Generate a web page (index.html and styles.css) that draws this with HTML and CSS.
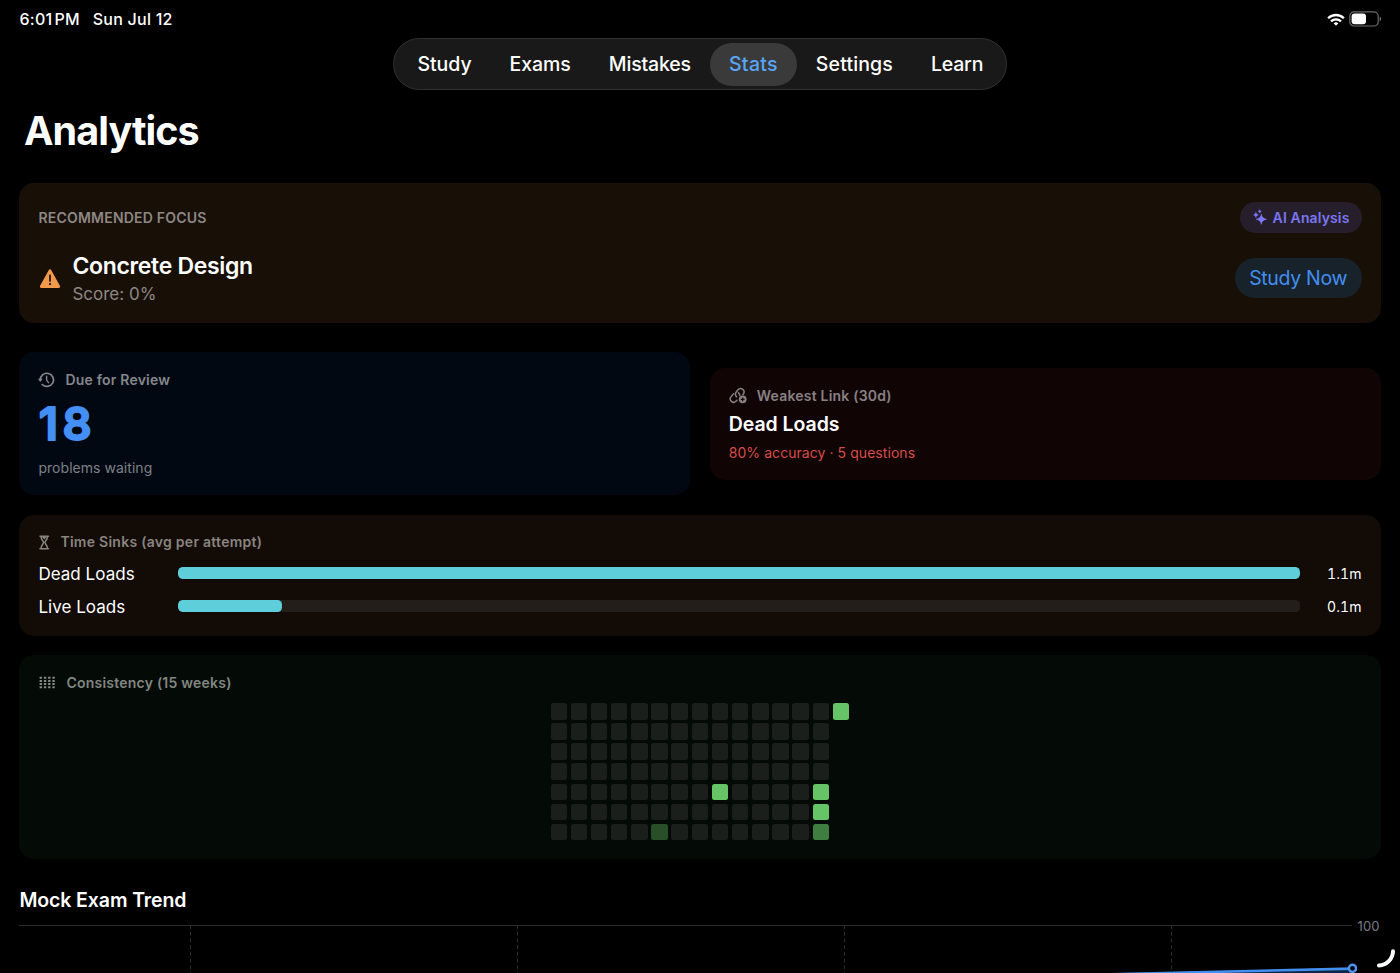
FILE: index.html
```html
<!DOCTYPE html>
<html lang="en">
<head>
<meta charset="utf-8">
<title>Analytics</title>
<link rel="stylesheet" href="styles.css">
</head>
<body>
<header class="status">
  <span class="time">6:01<i></i>PM</span><span class="date">Sun Jul 12</span>
  <span class="status-icons">
    <svg width="18" height="13" viewBox="0 0 18 13"><g fill="none" stroke="#fff" stroke-width="2.3"><path d="M1.1 5.2a11.3 11.3 0 0 1 15.8 0"/><path d="M4 8.4a7.1 7.1 0 0 1 10 0"/></g><path d="M9 12.8l-2.4-2.6a3.6 3.6 0 0 1 4.8 0z" fill="#fff"/></svg>
    <svg width="33" height="16" viewBox="0 0 33 16"><rect x=".8" y=".8" width="28.4" height="14.2" rx="4.3" fill="none" stroke="#6a6a6a" stroke-width="1.2"/><rect x="2.6" y="2.5" width="14.4" height="10.8" rx="3" fill="#fff"/><path d="M30.6 5.6q1.7.8 1.7 2.3t-1.7 2.3z" fill="#6a6a6a"/></svg>
  </span>
</header>
<nav class="tabs">
  <a class="tab">Study</a>
  <a class="tab">Exams</a>
  <a class="tab tab-mistakes">Mistakes</a>
  <a class="tab active">Stats</a>
  <a class="tab tab-settings">Settings</a>
  <a class="tab tab-learn">Learn</a>
</nav>
<h1 class="title">Analytics</h1>
<main class="content">
  <section class="card focus">
    <div class="focus-head">
      <span class="caps">RECOMMENDED FOCUS</span>
      <span class="ai"><svg width="14" height="17" viewBox="0 0 14 17"><path d="M8.3 5q.6 4.400 5.300 5.200-4.700.8-5.300 5.200-.6-4.400-5.300-5.200 4.700-.8 5.300-5.200zM2.900 3.200q.3 2.300 2.500 2.700-2.200.4-2.500 2.700-.3-2.300-2.500-2.700 2.200-.4 2.500-2.700zM6.700.6q.2 1.500 1.700 1.800-1.500.3-1.700 1.800-.2-1.500-1.700-1.800 1.500-.3 1.700-1.800z" fill="#7d7aff" stroke="#7d7aff" stroke-width=".4" stroke-linejoin="round"/></svg>AI Analysis</span>
    </div>
    <div class="focus-body">
      <svg class="warn" width="22" height="20" viewBox="0 0 22 20"><path d="M11 1.900L19.600 17.400H2.400z" fill="#f19a4b" stroke="#f19a4b" stroke-width="3" stroke-linejoin="round"/><path d="M11 6.300v5.600" stroke="#180f07" stroke-width="1.700" stroke-linecap="round"/><circle cx="11" cy="15.100" r="1.100" fill="#180f07"/></svg>
      <div class="topic"><span class="topic-name">Concrete Design</span><span class="score">Score: 0%</span></div>
      <button class="study">Study Now</button>
    </div>
  </section>
  <div class="pair">
    <section class="card due">
      <h2 class="label"><svg width="17" height="16" viewBox="0 0 17 16"><path d="M2.300 8a6.600 6.600 0 1 1 1.900 4.500" fill="none" stroke="currentColor" stroke-width="1.700" stroke-linecap="round"/><path d="M0 6.700h4.700L2.300 9.900z" fill="currentColor"/><path d="M8.600 4.200v4l1.900 2.500" fill="none" stroke="currentColor" stroke-width="1.400" stroke-linecap="round" stroke-linejoin="round"/></svg><span>Due for Review</span></h2>
      <svg class="count" width="60" height="44"><text x=".8" y="38">18</text></svg>
      <p class="note">problems waiting</p>
    </section>
    <section class="card weak">
      <h2 class="label"><svg width="18" height="17" viewBox="0 0 18 17"><g fill="none" stroke="currentColor" stroke-width="1.500" stroke-linecap="round"><path d="M7.500 9.700a3.500 3.500 0 0 1-.7-4.100L9 2.800a3.400 3.400 0 0 1 5.600 3.800l-.8 1.100"/><path d="M9.400 5.800a3.500 3.500 0 0 1 1.400 2.700M4.400 6.900L2 9.900a3.300 3.300 0 0 0 4.900 4.400l.9-.9"/></g><circle cx="13.700" cy="12.300" r="3.900" fill="currentColor"/><path d="M13.700 10.400v3.800M11.800 12.300h3.800" stroke="#110405" stroke-width="1.200"/></svg><span>Weakest Link (30d)</span></h2>
      <p class="weak-name">Dead Loads</p>
      <p class="weak-info">80% accuracy · 5 questions</p>
    </section>
  </div>
  <section class="card sinks">
    <h2 class="label"><svg width="12" height="15" viewBox="-.5 0 12 15"><path d="M1.500 1.300h8.500M1.500 13.700h8.500M2.500 1.500c0 3.600 2.500 4.200 2.500 6s-2.500 2.400-2.500 6M9 1.500c0 3.600-2.500 4.200-2.500 6s2.500 2.400 2.500 6" fill="none" stroke="currentColor" stroke-width="1.500" stroke-linecap="round"/><path d="M3.500 2h4.500L5.750 4.500z" fill="currentColor"/></svg><span>Time Sinks (avg per attempt)</span></h2>
    <div class="sink"><span class="sink-name">Dead Loads</span><span class="track"><span class="fill" style="width:100%"></span></span><span class="sink-time">1.1m</span></div>
    <div class="sink"><span class="sink-name">Live Loads</span><span class="track"><span class="fill" style="width:9.250%"></span></span><span class="sink-time">0.1m</span></div>
  </section>
  <section class="card consistency">
    <h2 class="label"><svg width="17" height="13" viewBox="0 0 17 13"><path d="M1.600 1.700h15.400M1.600 4.900h15.400M1.600 8.100h15.400M1.600 11.300h15.400" stroke="currentColor" stroke-width="2" stroke-dasharray="2.400 1.850"/></svg><span>Consistency (15 weeks)</span></h2>
    <div class="heat" id="heat"></div>
  </section>
  <h2 class="trend-title">Mock Exam Trend</h2>
  <div class="chart">
    <svg width="1338" height="48" viewBox="0 0 1338 48"><path d="M1099 48L1333 43V48z" fill="#0c2748"/><path d="M0 .5h1333" stroke="#2c2c2e"/><path d="M171.500 0v48M498.500 0v48M825.500 0v48M1152.500 0v48" stroke="#2c2c2e" stroke-dasharray="4 2.700"/><path d="M1053 50.200L1333 43.600" stroke="#438ff0" stroke-width="2.600"/><circle cx="1333.500" cy="43.300" r="3.600" fill="#020811" stroke="#4c94ee" stroke-width="2.400"/></svg>
    <span class="axis">100</span>
  </div>
</main>
<svg class="corner" width="24" height="26" viewBox="0 0 24 26"><path d="M17 4.300A14.500 14.500 0 0 1 3 18.500" fill="none" stroke="#fff" stroke-width="4" stroke-linecap="round"/></svg>
<script src="heat.js"></script>
</body>
</html>
```
FILE: heat.js
```js
// Activity level per "row-column"; every other day is empty.
const levels = { '0-14': 'l3', '4-8': 'l3', '4-13': 'l3', '5-13': 'l3', '6-5': 'l1', '6-13': 'l2' };
const heat = document.getElementById('heat');
for (let r = 0; r < 7; r++) {
  for (let c = 0; c < 15; c++) {
    const day = document.createElement('i');
    day.className = levels[r + '-' + c] || (c === 14 ? 'none' : '');
    heat.appendChild(day);
  }
}
```
FILE: styles.css
```css
* { box-sizing: border-box; margin: 0; padding: 0; }
html { background: #000; }
body { width: 1400px; height: 973px; overflow: hidden; background: #000; color: #fff; font-family: Inter, sans-serif; position: relative; }
svg { display: block; flex: none; }
span { white-space: nowrap; }
.status { display: flex; height: 38px; align-items: center; padding: 0 18px 0 19.500px; font-size: 16px; font-weight: 500; }
.time { letter-spacing: .28px; }
.time i { display: inline-block; width: 2px; }
.date { margin-left: 12.800px; letter-spacing: .24px; }
.status-icons { margin-left: auto; display: flex; align-items: center; gap: 4px; }
.tabs { display: flex; align-items: center; width: 614px; height: 52px; margin: 0 auto; padding: 0 4.500px; border: 1px solid #303030; border-radius: 26px; background: #191919; }
.tab { height: 43px; line-height: 43px; padding: 0 19px; border-radius: 22px; font-size: 19.500px; font-weight: 500; letter-spacing: -.06px; }
.tab.active { background: #3a3a3a; color: #58a6f5; letter-spacing: .3px; }
.tab-mistakes { letter-spacing: -.16px; }
.tab-settings { letter-spacing: .13px; }
.tab-learn { letter-spacing: -.2px; }
.title { height: 81px; line-height: 83px; padding-left: 24px; font-size: 39.500px; font-weight: 700; letter-spacing: -.93px; }
.content { padding: 12px 19.400px 0; }
.card { border-radius: 15px; padding: 0 19px; }
.focus { height: 140px; background: #180f07; }
.focus-head { display: flex; height: 69px; align-items: center; justify-content: space-between; }
.caps { color: #8e8884; font-size: 14px; font-weight: 600; letter-spacing: .22px; }
.ai { display: flex; align-items: center; gap: 6px; width: 121.500px; height: 31px; padding-left: 12.500px; margin-bottom: 1px; border-radius: 16px; background: #261f2b; color: #7a76f2; font-size: 14px; font-weight: 600; letter-spacing: .13px; }
.focus-body { display: flex; align-items: center; height: 53px; }
.warn { margin-left: 1px; }
.topic { display: flex; flex-direction: column; align-items: flex-start; margin-left: 11px; padding-top: 2px; }
.topic-name { font-size: 23px; font-weight: 600; line-height: 28px; letter-spacing: -.32px; }
.score { font-size: 17px; line-height: 28px; color: #8e8884; letter-spacing: 0; }
.study { margin: 0 0 2px auto; width: 127px; height: 40px; border: 0; border-radius: 20px; background: #17222b; color: #438ff0; font: 400 19.500px Inter, sans-serif; letter-spacing: -.33px; }
.pair { display: grid; grid-template-columns: 1fr 1fr; gap: 19.500px; align-items: center; margin-top: 29px; }
.label { display: flex; align-items: center; font-size: 14px; font-weight: 600; line-height: 20px; color: #85878c; letter-spacing: .21px; }
.due { height: 143px; background: #020811; padding-top: 17.500px; }
.due .label span { margin-left: 10px; }
.count { margin-top: 12px; overflow: visible; }
.count text { font-size: 45.500px; font-weight: 600; letter-spacing: 4.500px; fill: #438ff5; stroke: #438ff5; stroke-width: 2px; stroke-linejoin: round; }
.note { margin-top: 12.500px; font-size: 14px; line-height: 20px; color: #7d8088; letter-spacing: .04px; }
.weak { height: 112px; background: #110405; padding-top: 18px; }
.weak-name { font-size: 19.500px; font-weight: 600; line-height: 37px; letter-spacing: -.06px; }
.weak-info { font-size: 14px; line-height: 20px; color: #d64d49; letter-spacing: .06px; }
.weak .label { color: #898083; }
.weak .label span { margin-left: 10px; }
.sinks { margin-top: 20px; height: 120.500px; background: #120b06; padding-top: 17px; }
.sinks .label { color: #89847f; margin-bottom: 5px; letter-spacing: .27px; }
.sinks .label span { margin-left: 10px; }
.sink { display: flex; align-items: center; height: 33px; font-size: 17px; letter-spacing: .03px; }
.sink-name { width: 139.500px; }
.track { width: 1122px; height: 12px; margin-bottom: 1px; border-radius: 4.500px; background: #241e1a; overflow: hidden; }
.fill { display: block; height: 100%; border-radius: 4.500px; background: #5fcedb; }
.sink-time { margin-left: auto; font-size: 14px; letter-spacing: .1px; font-variant-numeric: tabular-nums; }
.consistency { margin-top: 19.500px; height: 204px; background: #040a05; padding-top: 17.500px; }
.consistency .label { color: #818782; letter-spacing: .23px; }
.consistency .label span { margin-left: 11px; }
.heat { display: grid; grid-template-columns: repeat(15, 16.500px); grid-auto-rows: 16.500px; gap: 3.660px; width: 299px; margin: 10.500px auto 0; }
.heat i { border-radius: 2.500px; background: #1b1f1c; }
.heat .none { background: none; }
.heat .l1 { background: #284f27; }
.heat .l2 { background: #3f7e40; }
.heat .l3 { background: #65c466; }
.trend-title { margin-top: 29px; line-height: 24px; font-size: 19.500px; font-weight: 600; letter-spacing: -.1px; }
.chart { display: flex; margin-top: 13px; }
.axis { font-size: 13px; line-height: 2px; color: #7b7b80; letter-spacing: .2px; }
.corner { position: absolute; right: 0; bottom: 0; }
```
